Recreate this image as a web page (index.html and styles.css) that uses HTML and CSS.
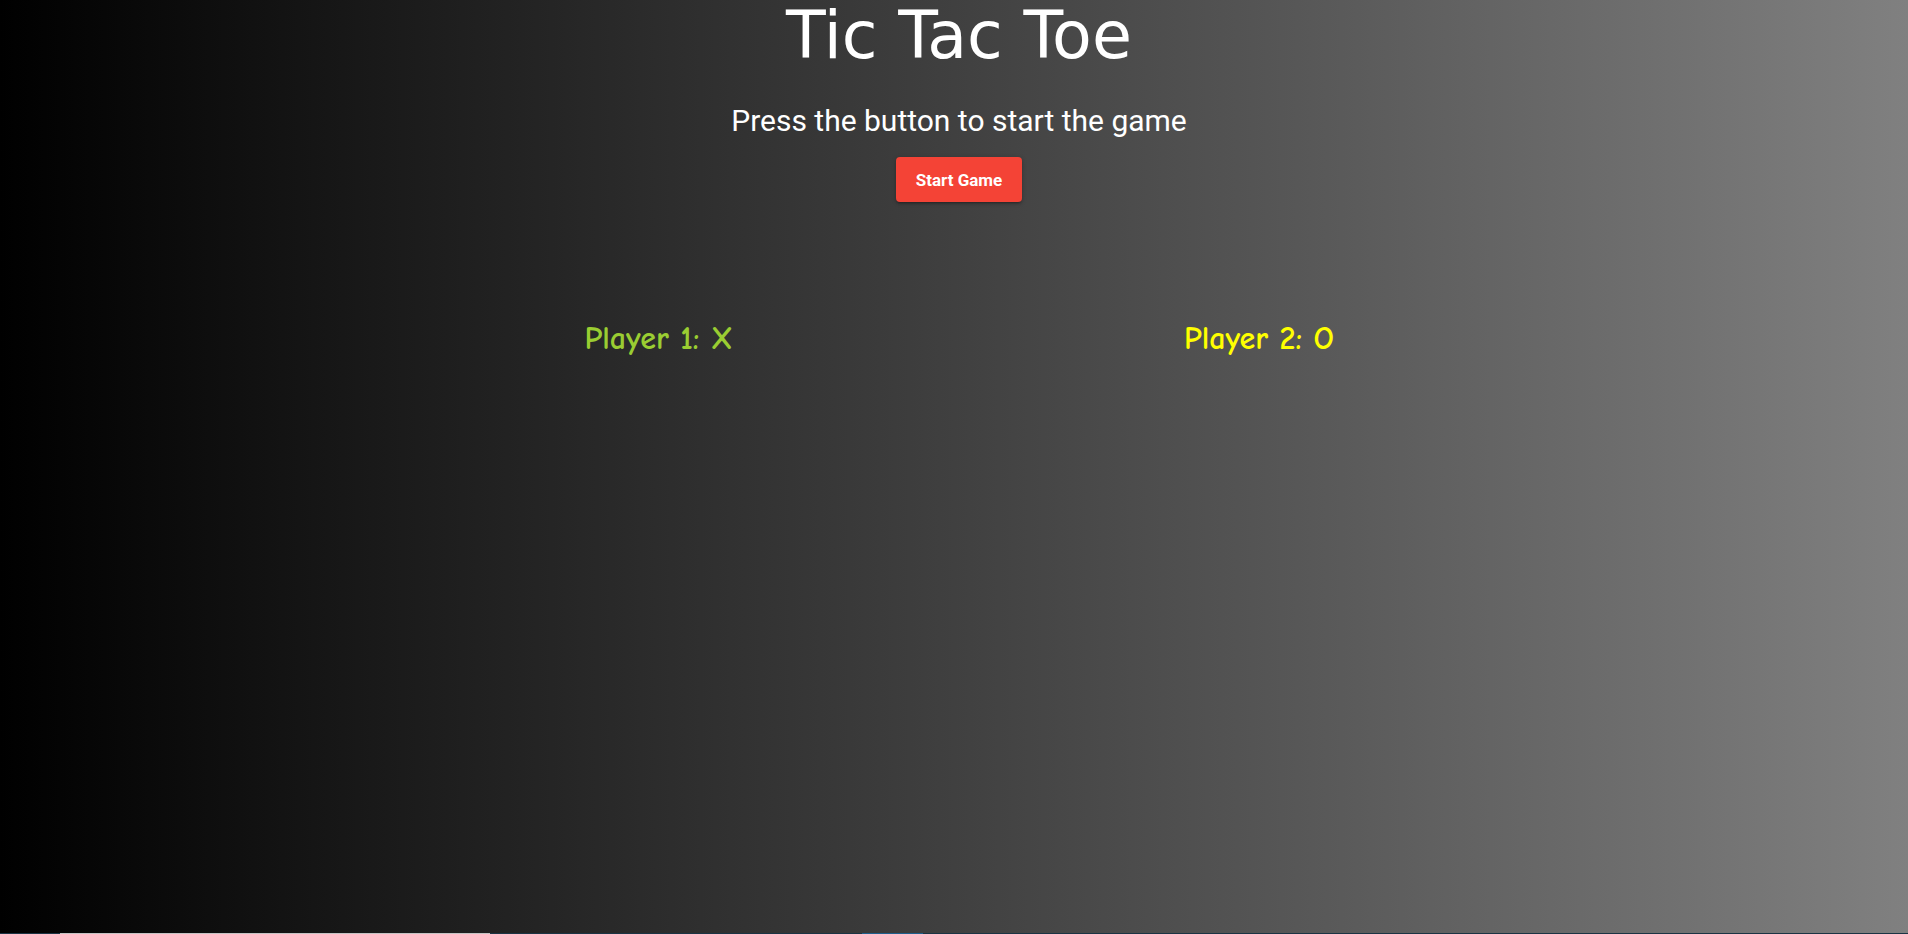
FILE: index.html
```html
<!DOCTYPE html>
<html lang="en">
<head>
<meta charset="utf-8">
<title>Tic Tac Toe</title>
<link rel="stylesheet" href="styles.css">
</head>
<body>
  <main class="page">
    <h1 class="title">Tic Tac Toe</h1>
    <p class="subtitle">Press the button to start the game</p>
    <button class="start-btn" type="button">Start Game</button>
    <div class="players">
      <div class="player player-one">Player 1: X</div>
      <div class="player player-two">Player 2: O</div>
    </div>
  </main>
  <div class="edge-bar">
    <span class="edge-seg edge-dark-a"></span>
    <span class="edge-seg edge-gray"></span>
    <span class="edge-seg edge-dark-b"></span>
    <span class="edge-seg edge-blue"></span>
    <span class="edge-seg edge-dark-c"></span>
  </div>
</body>
</html>
```

FILE: styles.css
```css
html, body {
  margin: 0;
  padding: 0;
  height: 100%;
}

body {
  background: linear-gradient(to right, #000000, #808080);
  color: #ffffff;
  font-family: "Roboto", "Liberation Sans", sans-serif;
  overflow: hidden;
}

.page {
  display: flex;
  flex-direction: column;
  align-items: center;
  padding-left: 10px;
}

.title {
  margin: 0;
  font-family: "DejaVu Sans", "Verdana", sans-serif;
  font-weight: normal;
  font-size: 65px;
  line-height: 71px;
  color: #ffffff;
}

.subtitle {
  margin: 32px 0 0;
  font-family: "Roboto", sans-serif;
  font-size: 30px;
  line-height: 36px;
  color: #ffffff;
}

.start-btn {
  margin-top: 18px;
  height: 45px;
  padding: 0 20px;
  border: none;
  border-radius: 4px;
  background: #f44336;
  color: #ffffff;
  font-family: "Roboto", sans-serif;
  font-weight: 700;
  font-size: 17px;
  box-shadow: 0 2px 2px rgba(0, 0, 0, 0.14), 0 3px 1px -2px rgba(0, 0, 0, 0.12), 0 1px 5px rgba(0, 0, 0, 0.2);
  cursor: pointer;
}

.players {
  margin-top: 121px;
  width: 1200px;
  display: grid;
  grid-template-columns: 1fr 1fr;
}

.player {
  text-align: center;
  font-family: "Comic Sans MS", "Comic Neue", "DejaVu Sans", sans-serif;
  font-weight: 700;
  font-size: 32px;
  line-height: 32px;
}

.player-one {
  color: #9acd32;
}

.player-two {
  color: #ffff00;
}

.edge-bar {
  position: fixed;
  left: 0;
  right: 0;
  bottom: 0;
  height: 1px;
  display: flex;
}

.edge-seg {
  display: block;
  height: 1px;
}

.edge-dark-a { width: 60px; background: #1b3444; }
.edge-gray { width: 430px; background: #c4c4c4; }
.edge-dark-b { width: 372px; background: #1b3444; }
.edge-blue { width: 61px; background: #1f5f8c; }
.edge-dark-c { flex: 1; background: #1b3444; }
```
